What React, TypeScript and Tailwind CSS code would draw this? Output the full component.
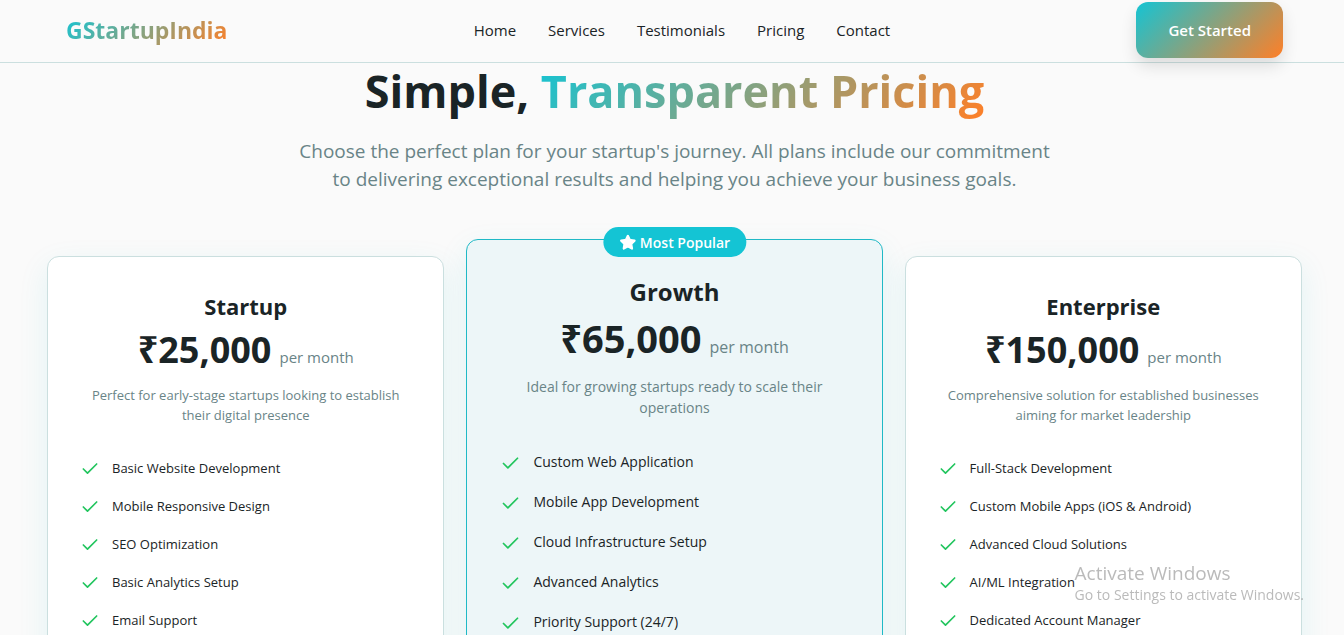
import { Check, Star } from "lucide-react";

const links = ["Home", "Services", "Testimonials", "Pricing", "Contact"];

type Plan = {
  name: string;
  price: string;
  description: string;
  features: string[];
};

const startup: Plan = {
  name: "Startup",
  price: "₹25,000",
  description: "Perfect for early-stage startups looking to establish their digital presence",
  features: [
    "Basic Website Development",
    "Mobile Responsive Design",
    "SEO Optimization",
    "Basic Analytics Setup",
    "Email Support",
  ],
};

const growth: Plan = {
  name: "Growth",
  price: "₹65,000",
  description: "Ideal for growing startups ready to scale their operations",
  features: [
    "Custom Web Application",
    "Mobile App Development",
    "Cloud Infrastructure Setup",
    "Advanced Analytics",
    "Priority Support (24/7)",
  ],
};

const enterprise: Plan = {
  name: "Enterprise",
  price: "₹150,000",
  description: "Comprehensive solution for established businesses aiming for market leadership",
  features: [
    "Full-Stack Development",
    "Custom Mobile Apps (iOS & Android)",
    "Advanced Cloud Solutions",
    "AI/ML Integration",
    "Dedicated Account Manager",
  ],
};

function PlanCard({ plan }: { plan: Plan }) {
  return (
    <article className="mt-[17px] flex-[397] rounded-xl border border-[#cbdfdf] bg-white px-8 pt-[33px] pb-12 shadow-[0_10px_30px_rgba(20,184,200,0.10)]">
      <div className="text-center">
        <h3 className="text-[22px] leading-8 font-bold">{plan.name}</h3>
        <p className="mt-2 flex items-baseline justify-center gap-2 leading-10">
          <span className="text-[36px] font-bold">{plan.price}</span>
          <span className="text-[15px] text-[#698487]">per month</span>
        </p>
        <p className="mt-2 text-[13px] leading-5 text-[#698487]">{plan.description}</p>
      </div>
      <ul className="mt-8 flex flex-col gap-4">
        {plan.features.map((feature) => (
          <li key={feature} className="flex items-center gap-3 text-[13px] leading-[22px]">
            <Check className="mt-0.5 size-5 shrink-0 text-[#22c55e]" />
            {feature}
          </li>
        ))}
      </ul>
    </article>
  );
}

function PopularPlanCard({ plan }: { plan: Plan }) {
  return (
    <article className="relative flex-[417] rounded-xl border border-[#1fb9c6] bg-[#edf6f8] px-[33px] pt-[35px] pb-12 shadow-[0_10px_30px_rgba(20,184,200,0.10)]">
      <div className="absolute -top-[13px] left-1/2 flex h-[30px] -translate-x-1/2 items-center gap-1 rounded-full bg-[#14c4d4] px-4 text-[14px] font-semibold whitespace-nowrap text-white">
        <Star className="size-[17px] fill-current" />
        Most Popular
      </div>
      <div className="text-center">
        <h3 className="text-[24px] leading-[34px] font-bold">{plan.name}</h3>
        <p className="mt-2 flex items-baseline justify-center gap-2 leading-[42px]">
          <span className="text-[38px] font-bold">{plan.price}</span>
          <span className="text-[16px] text-[#698487]">per month</span>
        </p>
        <p className="mt-2 px-6 text-[14px] leading-[21px] text-[#698487]">{plan.description}</p>
      </div>
      <ul className="mt-8 flex flex-col gap-4">
        {plan.features.map((feature) => (
          <li key={feature} className="flex items-center gap-3 text-[14px] leading-6">
            <Check className="mt-0.5 size-[21px] shrink-0 text-[#22c55e]" />
            {feature}
          </li>
        ))}
      </ul>
    </article>
  );
}

export default function App() {
  return (
    <div className="min-h-screen bg-[#fafafa] font-['Open_Sans','Noto_Sans',sans-serif] text-[#1a2426]">
      <header className="fixed inset-x-0 top-0 z-10 h-[63px] border-b border-[#cbdfdf] bg-[#fafafa]">
        <div className="flex h-[60px] items-center justify-between pr-[61px] pl-[66px]">
          <a
            href="#home"
            className="bg-[linear-gradient(135deg,#14c4d4,#ff7f27)] bg-clip-text text-[23px] leading-8 font-bold text-transparent"
          >
            GStartupIndia
          </a>
          <nav className="flex gap-8 text-[15px]">
            {links.map((link) => (
              <a key={link} href={`#${link.toLowerCase()}`}>
                {link}
              </a>
            ))}
          </nav>
          <button
            type="button"
            className="h-14 rounded-xl bg-[linear-gradient(135deg,#14c4d4,#ff7f27)] px-8 text-[15px] font-semibold text-white shadow-[0_8px_16px_rgba(0,0,0,0.12)]"
          >
            Get Started
          </button>
        </div>
      </header>
      <main className="pt-[61px] pr-[42px] pl-[47px]">
        <section className="text-center">
          <h1 className="text-[45px] leading-[60px] font-bold">
            Simple,{" "}
            <span className="bg-[linear-gradient(135deg,#14c4d4,#ff7f27)] bg-clip-text text-transparent">
              Transparent Pricing
            </span>
          </h1>
          <p className="mx-auto mt-4 max-w-3xl text-[19px] leading-7 text-[#698487]">
            Choose the perfect plan for your startup's journey. All plans include our commitment to
            delivering exceptional results and helping you achieve your business goals.
          </p>
        </section>
        <section className="mt-[46px] flex gap-[22px]">
          <PlanCard plan={startup} />
          <PopularPlanCard plan={growth} />
          <PlanCard plan={enterprise} />
        </section>
      </main>
      <aside className="pointer-events-none fixed right-10 bottom-[30px] z-20 text-[#8c8c8c]/60">
        <p className="text-[19px] leading-6">Activate Windows</p>
        <p className="text-[14px] leading-5">Go to Settings to activate Windows.</p>
      </aside>
    </div>
  );
}
